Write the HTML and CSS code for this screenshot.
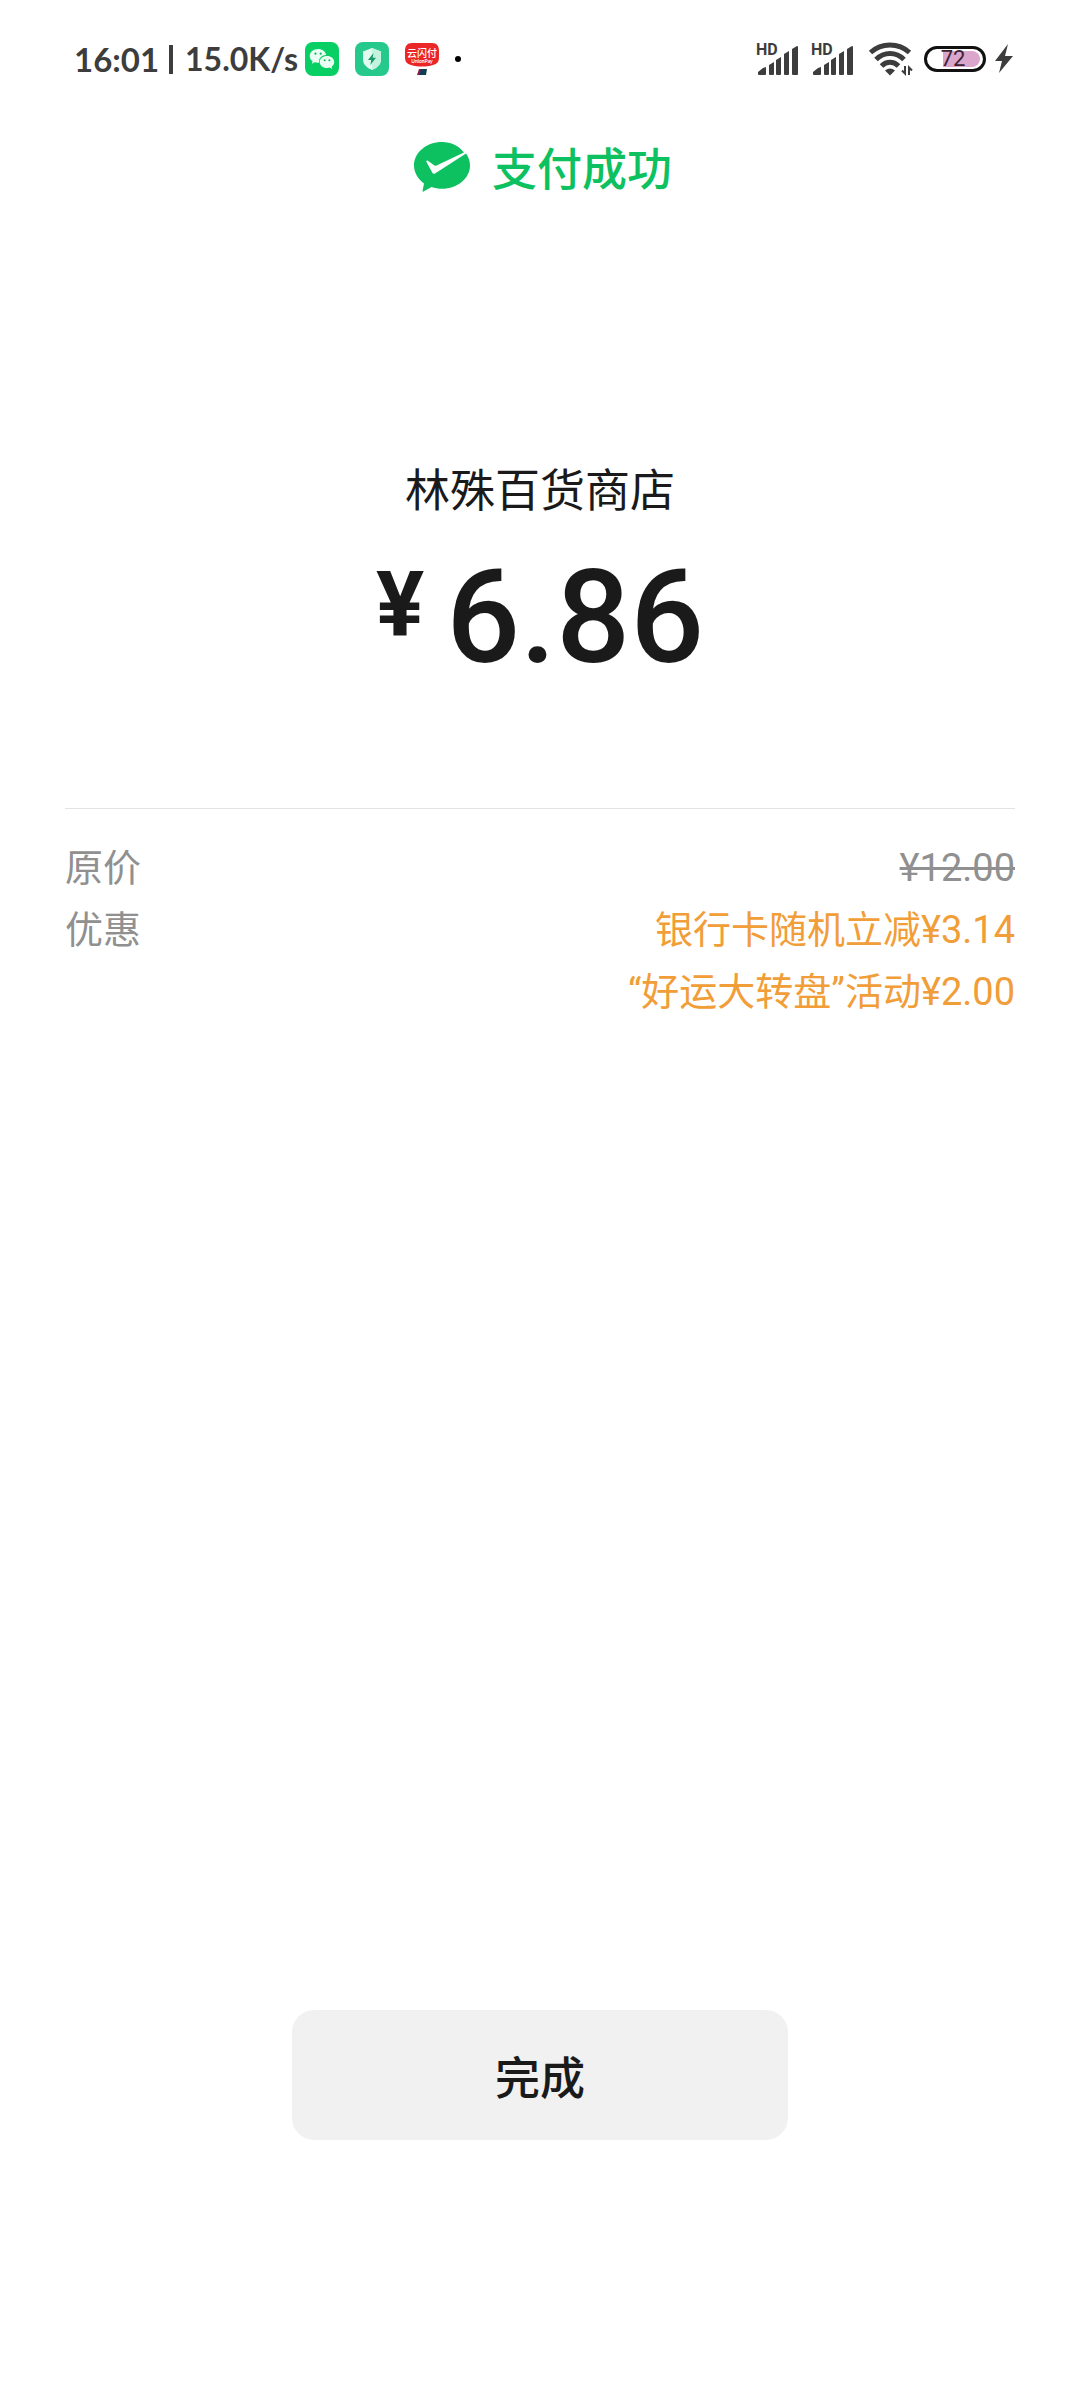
FILE: index.html
```html
<!DOCTYPE html>
<html lang="zh-CN">
<head>
  <meta charset="UTF-8">
  <title>支付成功</title>
  <meta name="viewport" content="width=device-width, initial-scale=1">
  <link rel="stylesheet" href="styles.css">
</head>
<body>
<!-- 状态栏 -->
<div class="status-bar">
  <div class="status-left">
    <span class="time">16:01</span>
    <span class="bar"></span>
    <span class="speed">15.0K/s</span>
    <div class="notices">
      <svg width="34" height="34" viewBox="0 0 34 34" aria-label="微信">
        <rect width="34" height="34" rx="8" fill="#07cf63"/>
        <path d="M13 7c-4.600 0-8.300 3-8.300 6.900 0 2.100 1.100 4 2.900 5.300l-.7 2.500 2.800-1.500c1 .3 2.100.5 3.300.5l1.200-.1c-.9-4.200 2.600-7.500 7-7.500C20.600 9.500 17.200 7 13 7z" fill="#eafff3"/>
        <path d="M22 14c-4.100 0-7.300 2.600-7.300 6s3.200 6 7.300 6c1 0 1.900-.1 2.700-.4l2.500 1.400-.6-2.200c1.600-1.100 2.600-2.800 2.600-4.800 0-3.400-3.200-6-7.200-6z" fill="#eafff3"/>
        <g fill="#07b858"><circle cx="10.500" cy="11.700" r="1.100"/><circle cx="15.700" cy="11.700" r="1.100"/><circle cx="19.700" cy="18.200" r="1"/><circle cx="24.400" cy="18.200" r="1"/></g>
      </svg>
      <svg width="34" height="34" viewBox="0 0 34 34" aria-label="安全">
        <rect width="34" height="34" rx="8" fill="#24c98b"/>
        <path d="M17 6l9 3.500v8c0 5-3.800 8.300-9 10.500-5.200-2.200-9-5.500-9-10.500v-8z" fill="#e2fbf1"/>
        <path d="M17 6l9 3.500v8c0 5-3.800 8.300-9 10.500z" fill="#c3f2de"/>
        <path d="M18.500 11l-5.500 7h3.300l-1 5 5.700-7.300h-3.400z" fill="#169a68"/>
      </svg>
      <svg width="34" height="34" viewBox="0 0 34 34" aria-label="云闪付">
        <path d="M7 1h20c5 0 7 3 7 8v6c0 5-2 7-6 8-7 2-15 2-22 0-4-1-6-3-6-8V9c0-5 2-8 7-8z" fill="#ea2626"/>
        <text class="app-name" x="17" y="15" text-anchor="middle">云闪付</text>
        <text class="app-sub" x="17" y="21" text-anchor="middle">UnionPay</text>
        <path d="M14 27h4l-2 6h-4z" fill="#8d1e3c"/>
        <path d="M16 27h3l-2 6h-3z" fill="#17386a"/>
        <path d="M18 27h4l-1 6h-5z" fill="#123f4c"/>
      </svg>
      <span class="dot"></span>
    </div>
  </div>
  <div class="status-right">
    <svg width="43" height="34" viewBox="0 0 43 34" aria-label="信号一">
      <text class="hd" x="0" y="13">HD</text>
      <g fill="#3d3d3d"><path d="M2 32v-2l5-4 3-1v7q0 1-1 1H3q-1 0-1-1z"/><path d="M13 23l5-3v12q0 1-1 1h-3q-1 0-1-1z"/><path d="M20 18l5-3v17q0 1-1 1h-3q-1 0-1-1z"/><path d="M28 12l5-3v23q0 1-1 1h-3q-1 0-1-1z"/><path d="M36 7l5-3q1 0 1 1v27q0 1-1 1h-4q-1 0-1-1z"/></g>
    </svg>
    <svg width="43" height="34" viewBox="0 0 43 34" aria-label="信号二">
      <text class="hd" x="0" y="13">HD</text>
      <g fill="#3d3d3d"><path d="M2 32v-2l5-4 3-1v7q0 1-1 1H3q-1 0-1-1z"/><path d="M13 23l5-3v12q0 1-1 1h-3q-1 0-1-1z"/><path d="M20 18l5-3v17q0 1-1 1h-3q-1 0-1-1z"/><path d="M28 12l5-3v23q0 1-1 1h-3q-1 0-1-1z"/><path d="M36 7l5-3q1 0 1 1v27q0 1-1 1h-4q-1 0-1-1z"/></g>
    </svg>
    <svg class="wifi" width="43" height="36" viewBox="0 0 43 36" aria-label="无线网络">
      <g fill="none" stroke="#3d3d3d" stroke-width="5">
        <path d="M1.500 11.500c11-10 28-10 39 0"/>
        <path d="M7 18.500c8-8 20-8 28 0"/>
        <path d="M12.500 25c5-5 12-5 17 0"/>
      </g>
      <path d="M16 29.500q5-4 10 0l-5 5z" fill="#3d3d3d"/>
      <path d="M33 29.500l3 3V25M43 29.500l-3-3V34" fill="none" stroke="#3d3d3d" stroke-width="2"/>
    </svg>
    <svg class="battery" width="62" height="28" viewBox="0 0 62 28" aria-label="电量 72%">
      <rect x="1.500" y="2.500" width="59" height="23" rx="11.500" fill="#fff" stroke="#111" stroke-width="3"/>
      <path d="M19 6h29a8 8 0 0 1 0 16H19z" fill="#dba6cb"/>
      <text class="level" x="29" y="21" text-anchor="middle">72</text>
    </svg>
    <svg width="20" height="30" viewBox="0 0 20 30" aria-label="充电中">
      <path d="M14 0L1 17h7L5 29l14-17h-8z" fill="#3d3d3d"/>
    </svg>
  </div>
</div>

<!-- 支付结果 -->
<header class="result">
  <svg width="56" height="50" viewBox="0 0 56 50" aria-hidden="true">
    <path d="M28 0C12.500 0 0 10.500 0 23.500 0 30.500 4 37 10 41.500L8.500 49q0 1 1 .5l8-4.500c3.300 1.200 6.800 1.800 10.500 1.800 15.500 0 28-10.300 28-23.300 0-4.500-1.400-8.500-4-12L21 31.500q-1.500.7-2.500-.5L12.500 20q-.6-2 1-1.500l7 5q1 .5 2 0L50 10.500C45 4 37 0 28 0z" fill="#0ec160"/>
  </svg>
  <span>支付成功</span>
</header>

<main class="content">
  <h1 class="shop">林殊百货商店</h1>
  <p class="amount"><span class="currency">¥</span><span>6.86</span></p>

  <dl class="details">
    <div class="row">
      <dt>原价</dt>
      <dd><del>¥12.00</del></dd>
    </div>
    <div class="row">
      <dt>优惠</dt>
      <dd class="discount">
        <div>银行卡随机立减¥3.14</div>
        <div>“好运大转盘”活动¥2.00</div>
      </dd>
    </div>
  </dl>
</main>

<button class="done" type="button">完成</button>
</body>
</html>
```
FILE: styles.css
```css
* {
  box-sizing: border-box;
}
body {
  display: flex;
  flex-direction: column;
  min-height: 100vh;
  margin: 0;
  padding-bottom: 260px;
  background: #fff;
  color: #1a1a1a;
  font-family: "Noto Sans CJK SC", sans-serif;
}

/* 状态栏 */
.status-bar {
  display: flex;
  justify-content: space-between;
  align-items: center;
  height: 118px;
  padding: 0 66px 0 74px;
  color: #3d3d3d;
  font-family: Lato, sans-serif;
}
.status-left,
.status-right,
.notices {
  display: flex;
  align-items: center;
}
.time,
.speed {
  font-size: 33px;
  font-weight: 700;
  line-height: 40px;
}
.speed {
  font-size: 32px;
}
.bar {
  width: 4px;
  height: 29px;
  margin: 0 12px 0 10px;
  background: #3d3d3d;
}
.notices {
  gap: 16px;
  margin-left: 7px;
}
.dot {
  width: 6px;
  height: 6px;
  border-radius: 50%;
  background: #000;
}
.status-right {
  gap: 12px;
}
.status-right svg {
  overflow: visible;
}
.wifi {
  margin-left: 3px;
}
.battery {
  margin-right: -4px;
}
.app-name {
  fill: #fff;
  font: 500 10px "Noto Sans CJK SC", sans-serif;
}
.app-sub {
  fill: #fff;
  font: 700 5px Lato, sans-serif;
}
.hd {
  fill: #3d3d3d;
  font: 700 16px Roboto, sans-serif;
}
.level {
  fill: #3a2233;
  font: 400 22px Roboto, sans-serif;
}

/* 支付结果 */
.result {
  display: flex;
  justify-content: center;
  align-items: center;
  gap: 22px;
  height: 98px;
  padding-left: 6px;
  color: #0ec160;
  font-size: 45px;
  font-weight: 500;
  line-height: 60px;
}
.content {
  padding: 0 65px;
}
.shop {
  margin: 240px 0 0;
  font-size: 45px;
  font-weight: 400;
  line-height: 64px;
  text-align: center;
}
.amount {
  display: flex;
  justify-content: center;
  align-items: flex-start;
  gap: 22px;
  margin: 24px 0 116px;
  font-family: Roboto, sans-serif;
  font-size: 130px;
  font-weight: 500;
  line-height: 148px;
}
.currency {
  font-size: 90px;
  font-weight: 700;
  line-height: 124px;
}
.details {
  margin: 0;
  padding-top: 28px;
  border-top: 1px solid #e3e3e3;
  font-family: Roboto, "Noto Sans CJK SC", sans-serif;
  font-size: 38px;
  line-height: 62px;
}
.row {
  display: flex;
  justify-content: space-between;
  color: #909090;
}
.row dd {
  margin: 0;
  text-align: right;
}
.row .discount {
  color: #f19d38;
}
.done {
  width: 46%;
  height: 130px;
  margin: auto auto 0;
  border: 0;
  border-radius: 22px;
  background: #f1f1f1;
  color: #1a1a1a;
  font-family: inherit;
  font-size: 45px;
  font-weight: 500;
  cursor: pointer;
}
```
